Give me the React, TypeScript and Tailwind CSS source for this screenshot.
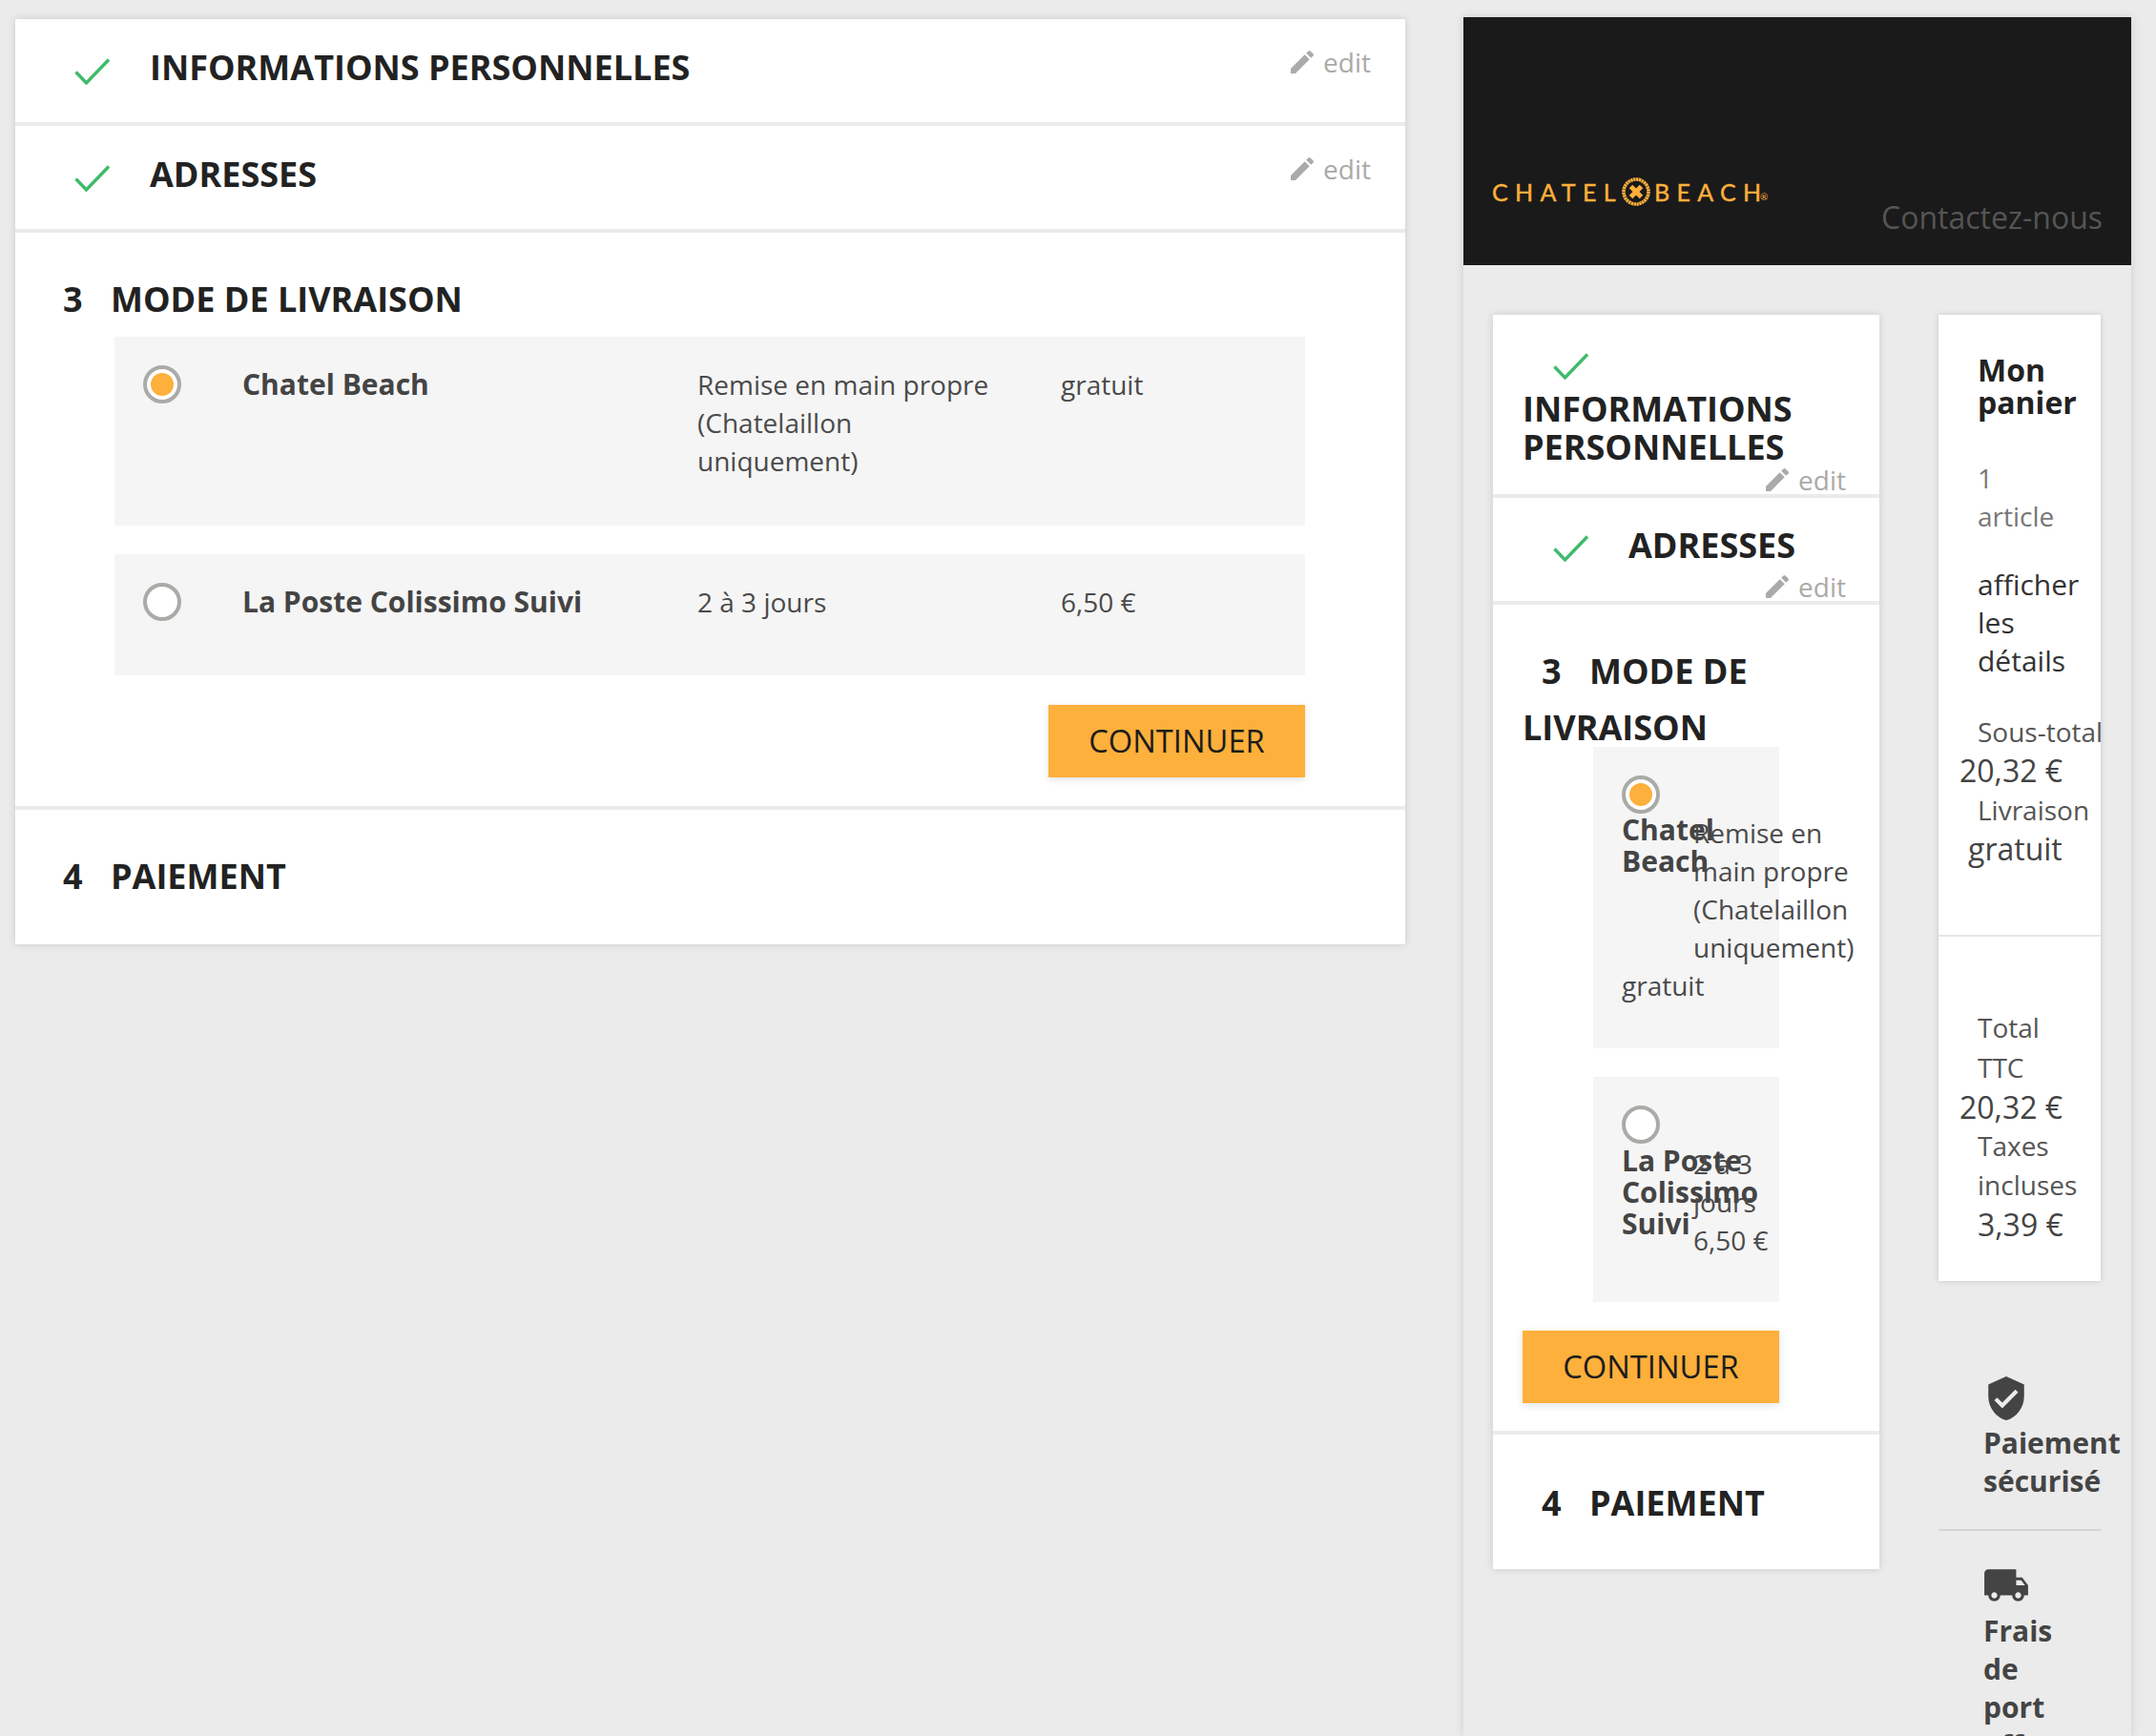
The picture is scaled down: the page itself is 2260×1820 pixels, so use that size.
import React from "react";
import { MdEdit, MdVerifiedUser, MdLocalShipping } from "react-icons/md";

const Check = ({ className = "" }: { className?: string }) => (
  <svg viewBox="0 0 38 28" className={`w-[38px] h-[28px] ${className}`} fill="none">
    <path d="M1.5 14.5 L12.5 26 L36 1.5" stroke="#3fbb6c" strokeWidth="3.4" />
  </svg>
);

const Edit = () => (
  <div className="flex items-center gap-[6px] text-[28px] leading-[40px] text-[#aaaaa8]">
    <MdEdit className="w-[32px] h-[32px]" />
    <span>edit</span>
  </div>
);

const Radio = ({ on }: { on?: boolean }) => (
  <div className="w-[40px] h-[40px] shrink-0 rounded-full border-[4px] border-[#aaaaa6] bg-white flex items-center justify-center">
    {on && <div className="w-[24px] h-[24px] rounded-full bg-[#fdb03b]" />}
  </div>
);

const Button = () => (
  <div className="w-[269px] h-[76px] flex items-center justify-center bg-[#fdb03b] text-[#1c1c1c] text-[32.7px] font-medium shadow-[0_2px_8px_rgba(0,0,0,0.12)]">
    CONTINUER
  </div>
);

const Logo = () => (
  <div className="flex items-center text-[#fdb03b] font-['Lato',sans-serif] text-[25px] leading-none [-webkit-text-stroke:0.4px_#fdb03b]">
    <span className="tracking-[7.3px] w-[136px]">CHATEL</span>
    <svg viewBox="0 0 30 30" className="w-[30px] h-[30px] mr-[4px]" fill="none">
      <circle cx="15" cy="15" r="13" stroke="#fdb03b" strokeWidth="3.6" strokeDasharray="2.4 0.5" />
      <path d="M9.5 9.5 L20.5 20.5 M20.5 9.5 L9.5 20.5" stroke="#fdb03b" strokeWidth="5" />
    </svg>
    <span className="tracking-[7.3px] w-[111px]">BEACH</span>
    <span className="text-[10px] self-end mb-[5px] [-webkit-text-stroke:0px]">®</span>
  </div>
);

const Title = ({ children, className = "" }: { children: React.ReactNode; className?: string }) => (
  <div className={`text-[36px] font-bold text-[#222222] ${className}`}>{children}</div>
);

function Wide() {
  return (
    <div className="w-[1457px] shrink-0 ml-[16px] mt-[20px] flex flex-col gap-[4px] shadow-[0_0_8px_rgba(0,0,0,0.14)] self-start">
      <div className="h-[108px] bg-white flex items-start pl-[62px] pr-[36px] pt-[38px] relative">
        <Check className="mt-[3px]" />
        <Title className="ml-[41px] leading-[46px] -mt-[10px]">INFORMATIONS PERSONNELLES</Title>
        <div className="ml-auto -mt-[13px]"><Edit /></div>
      </div>
      <div className="h-[108px] bg-white flex items-start pl-[62px] pr-[36px] pt-[38px]">
        <Check className="mt-[3px]" />
        <Title className="ml-[41px] leading-[46px] -mt-[10px]">ADRESSES</Title>
        <div className="ml-auto -mt-[13px]"><Edit /></div>
      </div>
      <div className="h-[601px] bg-white pl-[50px] pr-[105px]">
        <Title className="flex pt-[47px] leading-[46px]"><span className="w-[50px]">3</span><span>MODE DE LIVRAISON</span></Title>
        <div className="ml-[54px] mt-[16px] h-[198px] bg-[#f5f5f5] flex pl-[30px] pt-[30px] text-[28px] leading-[40px] text-[#4a4a4a]">
          <Radio on />
          <div className="w-[541px] pl-[64px] font-bold text-[30px] text-[#444444]">Chatel Beach</div>
          <div className="w-[381px]">Remise en main propre<br />(Chatelaillon<br />uniquement)</div>
          <div>gratuit</div>
        </div>
        <div className="ml-[54px] mt-[30px] h-[127px] bg-[#f5f5f5] flex pl-[30px] pt-[30px] text-[28px] leading-[40px] text-[#4a4a4a]">
          <Radio />
          <div className="w-[541px] pl-[64px] font-bold text-[30px] text-[#444444]">La Poste Colissimo Suivi</div>
          <div className="w-[381px]">2 à 3 jours</div>
          <div>6,50 €</div>
        </div>
        <div className="flex justify-end mt-[31px]"><Button /></div>
      </div>
      <div className="h-[141px] bg-white pl-[50px]">
        <Title className="flex pt-[47px] leading-[46px]"><span className="w-[50px]">4</span><span>PAIEMENT</span></Title>
      </div>
    </div>
  );
}

function Narrow() {
  return (
    <div className="w-[405px] shrink-0 flex flex-col gap-[4px] shadow-[0_0_8px_rgba(0,0,0,0.14)] self-start">
      <div className="h-[188px] bg-white pl-[31px] relative">
        <div className="pt-[40px] pl-[32px]"><Check /></div>
        <Title className="leading-[40px] mt-[11px]">INFORMATIONS<br />PERSONNELLES</Title>
        <div className="absolute right-[35px] bottom-[-5px]"><Edit /></div>
      </div>
      <div className="h-[108px] bg-white flex items-start pl-[63px] pt-[39px] relative">
        <Check />
        <Title className="leading-[46px] ml-[41px] -mt-[12px]">ADRESSES</Title>
        <div className="absolute right-[35px] bottom-[-5px]"><Edit /></div>
      </div>
      <div className="h-[866px] bg-white pl-[31px]">
        <Title className="leading-[59px] pt-[40px] w-[350px]">
          <span className="inline-block w-[50px] ml-[20px]">3</span>MODE DE LIVRAISON
        </Title>
        <div className="ml-[74px] -mt-[9px] w-[195px] h-[316px] bg-[#f5f5f5] pl-[30px] pt-[30px] text-[28px] leading-[40px] text-[#4a4a4a]">
          <Radio on />
          <div className="grid grid-cols-[75px_175px] -mt-[2px]">
            <div className="font-bold text-[30px] leading-[33px] pt-[2px] text-[#444444] w-[130px]">Chatel Beach</div>
            <div className="pt-[2px]">Remise en main propre (Chatelaillon uniquement)</div>
            <div className="col-span-2">gratuit</div>
          </div>
        </div>
        <div className="ml-[74px] mt-[30px] w-[195px] h-[236px] bg-[#f5f5f5] pl-[30px] pt-[30px] text-[28px] leading-[40px] text-[#4a4a4a]">
          <Radio />
          <div className="grid grid-cols-[75px_90px] -mt-[2px]">
            <div className="font-bold text-[30px] leading-[33px] pt-[3px] text-[#444444] w-[130px]">La Poste Colissimo Suivi</div>
            <div className="pt-[3px]">2 à 3 jours<div>6,50 €</div></div>
          </div>
        </div>
        <div className="mt-[30px]"><Button /></div>
      </div>
      <div className="h-[141px] bg-white pl-[51px]">
        <Title className="flex pt-[49px] leading-[46px]"><span className="w-[50px]">4</span><span>PAIEMENT</span></Title>
      </div>
    </div>
  );
}

function Side() {
  return (
    <div className="w-[170px] shrink-0 ml-[62px]">
      <div className="h-[1013px] bg-white shadow-[0_0_6px_rgba(0,0,0,0.16)] flex flex-col">
        <div className="h-[652px] pl-[41px] border-b-2 border-[#e6e6e6]">
          <div className="text-[32px] font-bold leading-[34px] pt-[41px] text-[#222222]">Mon<br />panier</div>
          <div className="text-[28px] leading-[40px] text-[#777777] mt-[42px]">1<br />article</div>
          <div className="text-[30px] leading-[40px] text-[#333333] mt-[32px] w-[110px]">afficher les détails</div>
          <div className="text-[28px] leading-[40px] text-[#555555] mt-[34px] whitespace-nowrap">Sous-total</div>
          <div className="text-[32px] leading-[42px] text-[#444444] -ml-[19px]">20,32 €</div>
          <div className="text-[28px] leading-[40px] text-[#555555]">Livraison</div>
          <div className="text-[32px] leading-[42px] text-[#444444] -ml-[10px]">gratuit</div>
        </div>
        <div className="pl-[41px] pt-[74px]">
          <div className="text-[28px] leading-[42px] text-[#555555]">Total<br />TTC</div>
          <div className="text-[32px] leading-[41px] text-[#444444] -ml-[19px]">20,32 €</div>
          <div className="text-[28px] leading-[41px] text-[#555555]">Taxes<br />incluses</div>
          <div className="text-[32px] leading-[42px] text-[#444444]">3,39 €</div>
        </div>
      </div>
      <div className="pl-[47px] pt-[103px] w-[170px] text-[#444444] font-bold text-[30px] leading-[40px]">
        <MdVerifiedUser className="w-[50px] h-[50px] -ml-[1px] -mt-[5px]" />
        <div className="mt-[2px] whitespace-nowrap">Paiement<br />sécurisé</div>
      </div>
      <div className="h-[2px] bg-[#d4d4d4] mt-[30px]" />
      <div className="pl-[47px] pt-[32px] text-[#444444] font-bold text-[30px] leading-[40px]">
        <MdLocalShipping className="w-[50px] h-[50px] -ml-[1px]" />
        <div className="mt-[3px] w-[100px]">Frais de port offerts</div>
      </div>
    </div>
  );
}

export default function App() {
  return (
    <div className="w-[2260px] h-[1820px] overflow-hidden bg-[#ebebeb] flex font-['Open_Sans',sans-serif]">
      <Wide />
      <div className="ml-[61px] mt-[18px] w-[700px] shrink-0 flex flex-col shadow-[0_0_10px_rgba(0,0,0,0.12)]">
        <div className="h-[260px] bg-[#1a1a1a] flex items-end justify-between pl-[30px] pr-[30px] pb-[28px] shrink-0">
          <div className="mb-[34px]"><Logo /></div>
          <div className="text-[32px] leading-[44px] text-[#555555]">Contactez-nous</div>
        </div>
        <div className="flex pl-[31px] pt-[52px]">
          <Narrow />
          <Side />
        </div>
      </div>
    </div>
  );
}
